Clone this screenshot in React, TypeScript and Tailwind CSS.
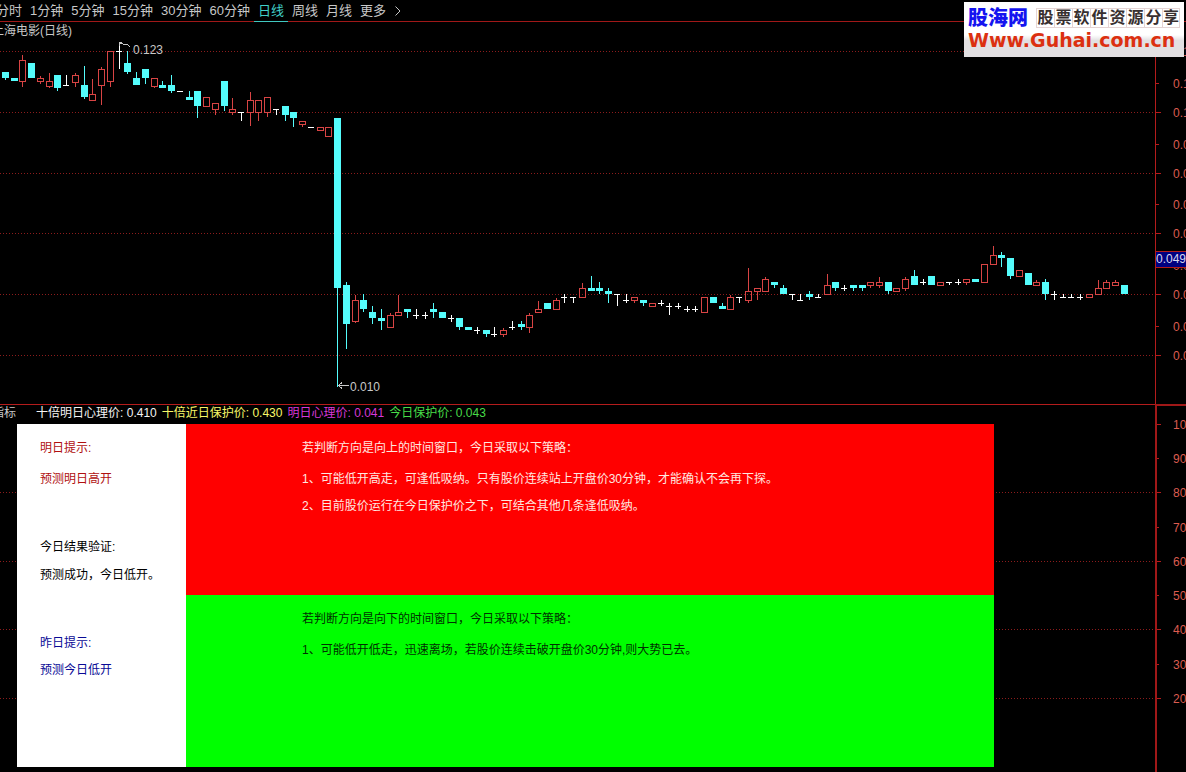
import { useState } from "react";

type Kind = "up" | "down" | "flat";
// high, body top, body bottom, low (flat candles use the body top as their line)
type Candle = [Kind, number, number, number, number];

const PERIODS = ["分时", "1分钟", "5分钟", "15分钟", "30分钟", "60分钟", "日线", "周线", "月线", "更多"];

const TAB_BAR = 22;
const STEP = 8.74;

const CANDLES: Candle[] = [
  ["down", 72, 72, 78, 80],
  ["down", 78, 78, 81, 81],
  ["up", 55, 60, 81, 87],
  ["down", 63, 63, 78, 78],
  ["up", 76, 78, 81, 84],
  ["up", 73, 81, 86, 88],
  ["down", 75, 75, 88, 91],
  ["flat", 75, 85, 85, 86],
  ["up", 73, 75, 82, 87],
  ["down", 66, 85, 97, 99],
  ["up", 79, 94, 100, 100],
  ["up", 67, 69, 85, 105],
  ["up", 51, 51, 81, 87],
  ["flat", 42, 51, 51, 69],
  ["down", 51, 63, 72, 74],
  ["down", 72, 78, 85, 85],
  ["down", 69, 69, 78, 84],
  ["up", 78, 78, 86, 88],
  ["down", 81, 85, 88, 88],
  ["down", 75, 85, 91, 93],
  ["flat", 91, 91, 91, 92],
  ["down", 91, 97, 100, 100],
  ["down", 91, 91, 106, 118],
  ["up", 97, 97, 106, 106],
  ["up", 103, 103, 109, 115],
  ["down", 81, 81, 106, 111],
  ["up", 98, 109, 112, 115],
  ["flat", 112, 112, 112, 121],
  ["up", 92, 100, 112, 126],
  ["up", 100, 100, 112, 121],
  ["up", 97, 97, 112, 117],
  ["flat", 109, 109, 109, 115],
  ["down", 106, 106, 115, 121],
  ["down", 112, 112, 118, 127],
  ["up", 121, 121, 124, 127],
  ["flat", 127, 127, 127, 128],
  ["up", 127, 127, 130, 130],
  ["up", 127, 127, 136, 136],
  ["down", 118, 118, 288, 387],
  ["down", 282, 285, 324, 349],
  ["up", 295, 300, 321, 323],
  ["down", 294, 300, 309, 312],
  ["down", 306, 312, 318, 324],
  ["down", 309, 318, 321, 330],
  ["up", 313, 315, 327, 327],
  ["up", 295, 312, 315, 315],
  ["down", 309, 309, 312, 318],
  ["flat", 309, 315, 315, 319],
  ["flat", 312, 315, 315, 319],
  ["down", 303, 309, 312, 318],
  ["down", 312, 312, 318, 318],
  ["flat", 315, 318, 318, 322],
  ["down", 318, 318, 327, 330],
  ["down", 327, 327, 330, 330],
  ["flat", 327, 330, 330, 334],
  ["down", 330, 330, 334, 337],
  ["flat", 327, 334, 334, 337],
  ["up", 328, 330, 334, 337],
  ["flat", 321, 327, 327, 330],
  ["down", 321, 324, 327, 330],
  ["up", 313, 315, 327, 333],
  ["up", 301, 309, 312, 312],
  ["down", 303, 303, 309, 309],
  ["up", 298, 300, 309, 309],
  ["flat", 294, 297, 297, 303],
  ["flat", 297, 297, 297, 303],
  ["up", 283, 288, 297, 297],
  ["down", 276, 288, 291, 291],
  ["down", 282, 288, 291, 294],
  ["down", 288, 291, 294, 303],
  ["flat", 294, 294, 294, 306],
  ["flat", 294, 300, 300, 303],
  ["up", 297, 297, 300, 303],
  ["down", 300, 300, 303, 306],
  ["up", 303, 303, 306, 306],
  ["flat", 300, 303, 303, 306],
  ["flat", 303, 306, 306, 315],
  ["flat", 303, 306, 306, 309],
  ["flat", 306, 309, 309, 312],
  ["flat", 306, 309, 309, 312],
  ["up", 297, 297, 312, 312],
  ["down", 297, 297, 303, 303],
  ["down", 303, 306, 309, 309],
  ["up", 295, 297, 309, 309],
  ["flat", 297, 297, 297, 303],
  ["up", 268, 291, 300, 303],
  ["up", 288, 288, 291, 300],
  ["up", 277, 279, 291, 291],
  ["down", 282, 282, 285, 288],
  ["down", 285, 288, 294, 294],
  ["flat", 294, 294, 294, 300],
  ["flat", 294, 300, 300, 301],
  ["down", 291, 294, 297, 300],
  ["flat", 294, 297, 297, 298],
  ["up", 274, 285, 294, 294],
  ["down", 282, 282, 288, 291],
  ["flat", 285, 288, 288, 291],
  ["down", 285, 285, 288, 291],
  ["down", 285, 285, 288, 291],
  ["up", 282, 282, 285, 288],
  ["up", 277, 282, 285, 288],
  ["down", 282, 282, 291, 294],
  ["up", 288, 288, 291, 291],
  ["up", 277, 279, 288, 291],
  ["down", 270, 276, 285, 285],
  ["flat", 279, 282, 282, 285],
  ["down", 276, 276, 285, 285],
  ["up", 282, 282, 285, 285],
  ["flat", 282, 282, 282, 285],
  ["flat", 279, 282, 282, 285],
  ["up", 279, 279, 282, 285],
  ["down", 279, 279, 282, 282],
  ["up", 264, 264, 282, 282],
  ["up", 246, 255, 264, 264],
  ["down", 252, 255, 258, 267],
  ["down", 258, 258, 276, 279],
  ["up", 270, 270, 276, 276],
  ["down", 273, 273, 285, 285],
  ["up", 280, 282, 285, 285],
  ["down", 279, 282, 294, 300],
  ["flat", 291, 294, 294, 300],
  ["flat", 294, 297, 297, 298],
  ["flat", 294, 297, 297, 298],
  ["flat", 294, 297, 297, 300],
  ["up", 294, 294, 297, 297],
  ["up", 280, 288, 294, 294],
  ["up", 280, 282, 288, 288],
  ["up", 280, 282, 285, 285],
  ["down", 285, 285, 294, 294],
];

const PRICES = [
  { y: 51, text: "0.120" },
  { y: 83, text: "0.110" },
  { y: 112, text: "0.100" },
  { y: 144, text: "0.090" },
  { y: 173, text: "0.080" },
  { y: 204, text: "0.070" },
  { y: 233, text: "0.060" },
  { y: 265, text: "0.050" },
  { y: 294, text: "0.040" },
  { y: 326, text: "0.030" },
  { y: 355, text: "0.020" },
];

// y counts from the top of the indicator pane
const LEVELS = [
  { y: 19, text: "100.0" },
  { y: 53, text: "90.0" },
  { y: 87, text: "80.0" },
  { y: 122, text: "70.0" },
  { y: 156, text: "60.0" },
  { y: 190, text: "50.0" },
  { y: 224, text: "40.0" },
  { y: 259, text: "30.0" },
  { y: 293, text: "20.0" },
];

const READINGS = [
  { label: "十倍明日心理价", value: "0.410", color: "text-[#f4f4f4]" },
  { label: "十倍近日保护价", value: "0.430", color: "text-[#f8f868]" },
  { label: "明日心理价", value: "0.041", color: "text-[#d838d8]" },
  { label: "今日保护价", value: "0.043", color: "text-[#48dc48]" },
];

function CandleShape({ candle, x }: { candle: Candle; x: number }) {
  const [kind, high, top, bottom, low] = candle;
  if (kind === "down") {
    return (
      <g fill="#54fcfc">
        <rect x={x} y={high} width={1} height={low - high} />
        <rect x={x - 3} y={top} width={7} height={bottom - top} />
      </g>
    );
  }
  if (kind === "flat") {
    return (
      <g fill="#ffffff">
        <rect x={x} y={high} width={1} height={low - high} />
        <rect x={x - 3} y={top} width={6} height={1} />
      </g>
    );
  }
  return (
    <g fill="#d84444">
      <rect x={x} y={high} width={1} height={top - high} />
      <rect x={x} y={bottom} width={1} height={low - bottom} />
      <rect x={x - 3} y={top} width={6} height={bottom - top} fill="none" stroke="#d84444" transform="translate(.5 .5)" />
    </g>
  );
}

function GridLine({ y }: { y: number }) {
  return <line x1="0" x2="100%" y1={y + 0.5} y2={y + 0.5} stroke="#8c1c1c" strokeDasharray="1 2" />;
}

function PeriodTabs() {
  const [period, setPeriod] = useState("日线");

  return (
    <nav className="flex h-[22px] items-stretch border-b border-[#a01818] text-[13px] leading-5 text-[#c8c8c8]">
      {PERIODS.map((p) => (
        <button
          key={p}
          type="button"
          onClick={() => setPeriod(p)}
          className={`-mb-px border-b px-1 whitespace-nowrap first:-ml-2 ${
            p === period ? "border-[#40c8c0] text-[#40d0c8]" : "border-transparent"
          }`}
        >
          {p}
        </button>
      ))}
      <button type="button" aria-label="下一页" className="px-1">
        <svg width="8" height="12" viewBox="0 0 8 12" fill="none" stroke="currentColor">
          <path d="M1.5 1.5 6 6 1.5 10.5" />
        </svg>
      </button>
    </nav>
  );
}

function PriceChart() {
  return (
    <section className="flex">
      <div className="relative min-w-0 flex-1">
        <h1 className="absolute top-px -left-2 text-xs leading-4 text-[#c8c8c8]">上海电影(日线)</h1>
        <svg className="block h-[382px] w-full" shapeRendering="crispEdges">
          <g transform={`translate(0 ${-TAB_BAR})`}>
            {PRICES.filter((_, i) => i % 2 === 0).map((p) => (
              <GridLine key={p.y} y={p.y} />
            ))}
            {CANDLES.map((c, i) => (
              <CandleShape key={i} candle={c} x={Math.round(5 + i * STEP)} />
            ))}
            <g fill="none" stroke="#c8c8c8">
              <path d="M119.500 46V42.500H122M119 42.500 124 44.500H127L130 46.500" />
              <path d="M338 385.500H349M342 382.500 338.500 385.500 342 388.500" />
            </g>
            <g fill="#c8c8c8" className="text-xs">
              <text x="133" y="54">0.123</text>
              <text x="350" y="391">0.010</text>
            </g>
          </g>
        </svg>
      </div>
      <div className="w-[31px] border-l border-[#b41c1c]">
        <svg className="block h-[382px] w-full overflow-hidden" shapeRendering="crispEdges">
          <g transform={`translate(0 ${-TAB_BAR})`}>
            {PRICES.map((p, i) => (
              <g key={p.y}>
                <rect x="0" y={p.y} width={i % 2 ? 3 : 5} height="1" fill="#b41c1c" />
                <text x="17" y={p.y + 5} fill="#dc5c50" className="text-xs">{p.text}</text>
              </g>
            ))}
            <rect x="0" y="251" width="31" height="17" fill="#000080" />
            <path d="M0 251.500H31M0 267.500H31" stroke="#b41c1c" />
            <text x="0" y="263" fill="#d8d8f0" className="text-xs">0.049</text>
          </g>
        </svg>
      </div>
    </section>
  );
}

function SignalPanel() {
  return (
    <div className="relative mr-[161px] ml-[17px] flex text-xs leading-4">
      <div className="w-[169px] shrink-0 bg-white pt-4 pl-[23px]">
        <div className="space-y-[15px] text-[#b01010]">
          <p>明日提示:</p>
          <p>预测明日高开</p>
        </div>
        <div className="mt-[52px] space-y-3 text-black">
          <p>今日结果验证:</p>
          <p>预测成功，今日低开。</p>
        </div>
        <div className="mt-[52px] space-y-[11px] text-[#0a0a96]">
          <p>昨日提示:</p>
          <p>预测今日低开</p>
        </div>
      </div>
      <div className="min-w-0 flex-1">
        <div className="min-h-[171px] bg-[#ff0000] pt-4 pl-[116px] text-[#ffe8e0]">
          <p>若判断方向是向上的时间窗口，今日采取以下策略：</p>
          <ol className="mt-[15px] space-y-[11px]">
            <li>1、可能低开高走，可逢低吸纳。只有股价连续站上开盘价30分钟，才能确认不会再下探。</li>
            <li>2、目前股价运行在今日保护价之下，可结合其他几条逢低吸纳。</li>
          </ol>
        </div>
        <div className="min-h-[172px] bg-[#00ff00] pt-4 pl-[116px] text-[#003000]">
          <p>若判断方向是向下的时间窗口，今日采取以下策略：</p>
          <ol className="mt-[15px]">
            <li>1、可能低开低走，迅速离场，若股价连续击破开盘价30分钟,则大势已去。</li>
          </ol>
        </div>
      </div>
    </div>
  );
}

function IndicatorPane() {
  return (
    <section className="flex flex-1">
      <div className="relative min-w-0 flex-1 border-t border-[#b41c1c]">
        <svg className="absolute inset-0 h-full w-full" shapeRendering="crispEdges">
          {LEVELS.filter((_, i) => i > 0 && i % 2 === 0).map((l) => (
            <GridLine key={l.y} y={l.y} />
          ))}
        </svg>
        <div className="relative flex h-[19px] gap-[5px] overflow-hidden text-xs leading-4 whitespace-nowrap">
          <span className="mr-[15px] -ml-2 text-[#c8c8c8]">指标</span>
          {READINGS.map((r) => (
            <span key={r.label} className={r.color}>
              {r.label}: {r.value}
            </span>
          ))}
        </div>
        <SignalPanel />
      </div>
      <div className="w-[31px] border-t-2 border-l-2 border-[#a01818]">
        <svg className="block h-[366px] w-full overflow-hidden" shapeRendering="crispEdges">
          {LEVELS.map((l, i) => (
            <g key={l.y}>
              <rect x="0" y={l.y - 1} width={i % 2 ? 2 : 4} height="1" fill="#b41c1c" />
              <text x="16" y={l.y + 4} fill="#dc5c50" className="text-xs">{l.text}</text>
            </g>
          ))}
        </svg>
      </div>
    </section>
  );
}

function SiteBadge() {
  return (
    <a
      href="#guhai"
      className="absolute top-0.5 right-0.5 block h-[55px] w-[220px] bg-linear-to-b from-white from-60% to-[#e2e0e2] to-70% px-1 whitespace-nowrap"
    >
      <span className="flex items-center gap-2 pt-0.5">
        <b className="text-[20px] leading-7 font-black text-[#1414f0]">股海网</b>
        <span className="flex text-base leading-[18px] font-bold text-[#383030]">
          {[..."股票软件资源分享"].map((ch) => (
            <span key={ch} className="w-[18px] border border-r-0 border-[#e4d4d4] text-center last:border-r">
              {ch}
            </span>
          ))}
        </span>
      </span>
      <span className="block font-['DejaVu_Sans'] text-[19px] leading-4 font-bold text-[#dc3010]">Www.Guhai.com.cn</span>
    </a>
  );
}

export default function App() {
  return (
    <main className="relative flex min-h-screen flex-col overflow-hidden bg-black font-['Liberation_Sans','Noto_Sans_CJK_SC',sans-serif]">
      <PeriodTabs />
      <PriceChart />
      <IndicatorPane />
      <SiteBadge />
    </main>
  );
}
